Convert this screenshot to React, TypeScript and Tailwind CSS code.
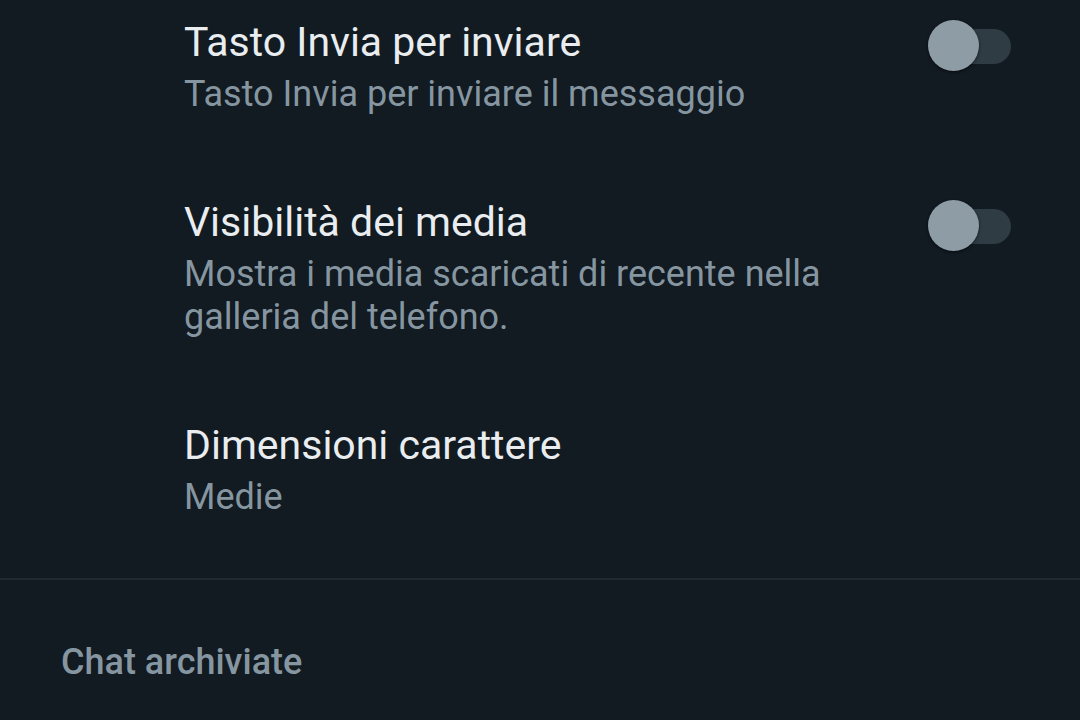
import { useState } from 'react'

interface Setting {
  title: string
  subtitle: string[]
  toggle?: boolean
}

const settings: Setting[] = [
  { title: 'Tasto Invia per inviare', subtitle: ['Tasto Invia per inviare il messaggio'], toggle: true },
  {
    title: 'Visibilità dei media',
    subtitle: ['Mostra i media scaricati di recente nella', 'galleria del telefono.'],
    toggle: true,
  },
  { title: 'Dimensioni carattere', subtitle: ['Medie'] },
]

function Toggle({ on, onChange }: { on: boolean; onChange: () => void }) {
  return (
    <button onClick={onChange} className="relative w-[83px] h-[52px] shrink-0">
      {/* Track */}
      <span className="absolute right-0 top-[9px] w-[82px] h-[35px] rounded-full bg-[#2f3c43]" />
      {/* Knob */}
      <span
        className={`absolute top-0 w-[51px] h-[51px] rounded-full bg-[#8e9da5] shadow-[0_1px_3px_rgba(0,0,0,0.6)] ${
          on ? 'right-0' : 'left-0'
        }`}
      />
    </button>
  )
}

export default function App() {
  const [toggles, setToggles] = useState<boolean[]>([false, false, false])

  return (
    <div
      className="w-[1080px] h-[720px] overflow-hidden bg-[#121a22] select-none"
      style={{ fontFamily: 'Roboto, "Noto Sans", sans-serif' }}
    >
      {/* Settings list */}
      <div className="flex flex-col gap-[81px] pt-[17px]">
        {settings.map((s, i) => (
          <div key={s.title} className="flex items-start pl-[184px] pr-[69px]">
            <div className="flex-1 min-w-0">
              <p className="text-[41px] leading-[50px] text-[#e9edef]">{s.title}</p>
              <div className="mt-[6px]">
                {s.subtitle.map((line) => (
                  <p key={line} className="text-[36px] leading-[43px] text-[#8696a0]">
                    {line}
                  </p>
                ))}
              </div>
            </div>
            {s.toggle && (
              <div className="mt-[3px]">
                <Toggle
                  on={toggles[i]}
                  onChange={() => setToggles((t) => t.map((v, j) => (j === i ? !v : v)))}
                />
              </div>
            )}
          </div>
        ))}
      </div>

      {/* Divider */}
      <div className="mt-[59px] h-[2px] bg-[#1f2a31]" />

      {/* Section header */}
      <div className="pl-[61px] pt-[61px]">
        <p className="text-[36px] leading-[43px] font-medium text-[#8696a0]">Chat archiviate</p>
      </div>
    </div>
  )
}
